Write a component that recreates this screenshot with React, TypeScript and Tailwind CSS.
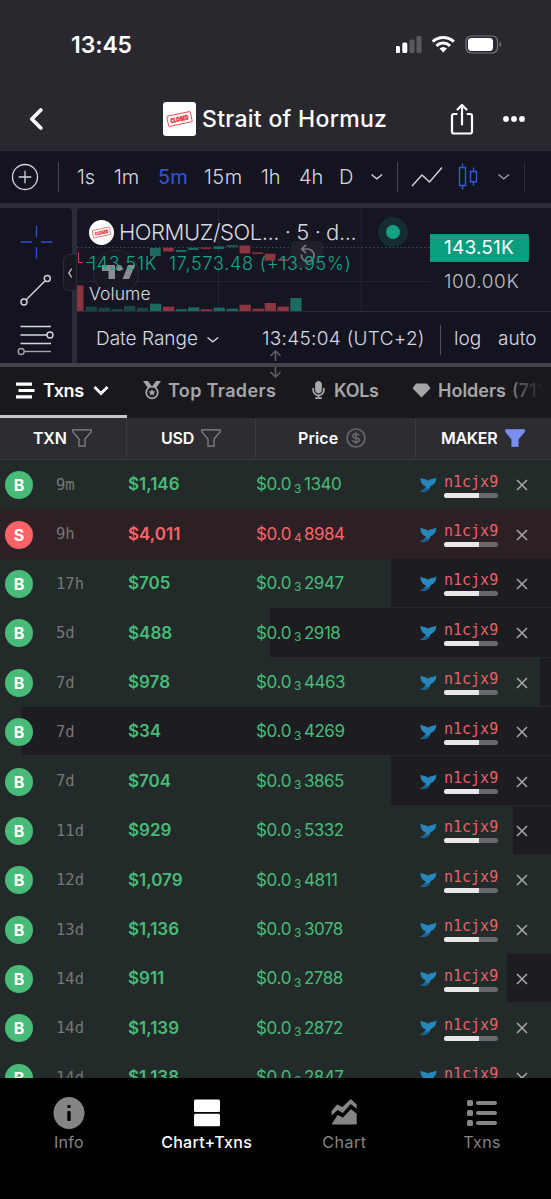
import React from 'react';
import { FaMicrophone } from 'react-icons/fa';

interface Txn {
  type: 'B' | 'S';
  age: string;
  usd: string;
  zeros: number;
  price: string;
  bar: number;
}

const TXNS: Txn[] = [
  { type: 'B', age: '9m', usd: '$1,146', zeros: 3, price: '1340', bar: 551 },
  { type: 'S', age: '9h', usd: '$4,011', zeros: 4, price: '8984', bar: 551 },
  { type: 'B', age: '17h', usd: '$705', zeros: 3, price: '2947', bar: 391 },
  { type: 'B', age: '5d', usd: '$488', zeros: 3, price: '2918', bar: 270 },
  { type: 'B', age: '7d', usd: '$978', zeros: 3, price: '4463', bar: 540 },
  { type: 'B', age: '7d', usd: '$34', zeros: 3, price: '4269', bar: 21 },
  { type: 'B', age: '7d', usd: '$704', zeros: 3, price: '3865', bar: 391 },
  { type: 'B', age: '11d', usd: '$929', zeros: 3, price: '5332', bar: 513 },
  { type: 'B', age: '12d', usd: '$1,079', zeros: 3, price: '4811', bar: 551 },
  { type: 'B', age: '13d', usd: '$1,136', zeros: 3, price: '3078', bar: 551 },
  { type: 'B', age: '14d', usd: '$911', zeros: 3, price: '2788', bar: 507 },
  { type: 'B', age: '14d', usd: '$1,139', zeros: 3, price: '2872', bar: 551 },
  { type: 'B', age: '14d', usd: '$1,138', zeros: 3, price: '2847', bar: 551 },
];

const GREEN = '#1c6b60';
const RED = '#8c3440';

// [x, y, height, color], relative to the chart pane
const CANDLES: [number, number, number, string][] = [
  [73, 40, 8, GREEN],
  [86, 39.7, 3.8, RED],
  [98.7, 42, 2, GREEN],
  [111, 39.7, 2.3, GREEN],
  [123.7, 39.5, 1.4, RED],
  [136.5, 38.3, 2.7, GREEN],
  [149.7, 37.3, 1.5, GREEN],
  [162.5, 37.6, 7.8, RED],
  [175.5, 44.4, 1.6, RED],
  [187.7, 45.7, 7, RED],
  [201, 51, 2, RED],
];

const VOLUME: [number, number, string][] = [
  [8.7, 4.3, '#164844'],
  [21.7, 3.3, '#164844'],
  [34.5, 2, '#164844'],
  [47, 5, '#164844'],
  [60, 3.3, '#164844'],
  [73, 7.3, GREEN],
  [86, 4.3, RED],
  [98.7, 1.7, GREEN],
  [111, 3.6, GREEN],
  [123.7, 1.7, RED],
  [136.5, 3.3, GREEN],
  [149.7, 2.3, GREEN],
  [162.5, 6.3, RED],
  [175.5, 2.3, RED],
  [187.7, 8, RED],
  [200.5, 4.4, RED],
  [213.3, 13, GREEN],
];

const ClosedStamp: React.FC<{ className: string }> = ({ className }) => (
  <svg viewBox="0 0 32 34" className={className}>
    <g transform="rotate(-12 16 17)" stroke="#e5484f" fill="none">
      <rect x="4" y="11.8" width="24" height="10.4" rx="0.6" strokeWidth="0.9" />
      <text
        x="16"
        y="19.4"
        textAnchor="middle"
        textLength="18.5"
        lengthAdjust="spacingAndGlyphs"
        fontSize="6.6"
        fontWeight="900"
        fontFamily="Inter, sans-serif"
        fill="#e11d2b"
        strokeWidth="0.3"
      >
        CLOSED
      </text>
    </g>
  </svg>
);

const StatusBar = () => (
  <div className="flex h-[88px] items-center pl-[71px] pr-[47px] pt-[2px] text-white">
    <span className="text-[23px] font-semibold tracking-[-0.1px]">13:45</span>
    <svg width="108" height="20" viewBox="0 0 108 20" className="ml-auto">
      <rect x="-1" y="11" width="5" height="7" rx="1.5" fill="#fff" />
      <rect x="6.300" y="7.500" width="5" height="10.500" rx="1.500" fill="#fff" />
      <rect x="13.500" y="4.500" width="5" height="13.500" rx="1.500" fill="#59585d" />
      <rect x="20.500" y="1" width="5" height="17" rx="1.500" fill="#59585d" />
      <g fill="none" stroke="#fff" strokeWidth="3">
        <path d="M36.700 6.600a15.500 15.500 0 0 1 21.100 0" />
        <path d="M40.500 10.800a9.800 9.800 0 0 1 13.500 0" />
      </g>
      <path d="M43.500 13.600a5.600 5.600 0 0 1 7.500 0l-3.750 4z" fill="#fff" />
      <rect x="70" y="1" width="31.500" height="17" rx="5.200" fill="none" stroke="#77767b" strokeWidth="1.200" />
      <rect x="72" y="3" width="25" height="13" rx="3.400" fill="#fff" />
      <path d="M103.500 7v5c2.300-.8 2.300-4.200 0-5z" fill="#77767b" />
    </svg>
  </div>
);

const TitleBar = () => (
  <div className="flex h-[62px] items-center text-white">
    <svg width="16" height="26" viewBox="0 0 16 26" fill="none" className="ml-[28px]">
      <path d="m12.800 4-9 9 9 9" stroke="#fff" strokeWidth="3.800" strokeLinecap="round" strokeLinejoin="round" />
    </svg>
    <ClosedStamp className="ml-[119px] h-[34px] w-[33px] rounded-[3px] bg-white" />
    <span className="ml-[6px] w-[190px] whitespace-nowrap text-[23px] font-medium tracking-[0.300px]">
      Strait of Hormuz
    </span>
    <svg width="26" height="34" viewBox="0 0 26 34" fill="none" stroke="#fff" strokeWidth="2.200" strokeLinejoin="round" className="ml-[57px] shrink-0">
      <path d="M8.300 12H5a2 2 0 0 0-2 2v15.500a2 2 0 0 0 2 2h16a2 2 0 0 0 2-2V14a2 2 0 0 0-2-2h-3.300" />
      <path d="M13 22.500V3.500M8.500 7.500 13 3l4.500 4.500" strokeLinecap="round" />
    </svg>
    <svg width="24" height="8" viewBox="0 0 24 8" fill="#fff" className="ml-[27px] shrink-0">
      <circle cx="4" cy="4" r="2.900" />
      <circle cx="12" cy="4" r="2.900" />
      <circle cx="20" cy="4" r="2.900" />
    </svg>
  </div>
);

const Chevron: React.FC<{ className: string }> = ({ className }) => (
  <svg width="14" height="8" viewBox="0 0 14 8" fill="none" className={className}>
    <path d="m1.5 1.5 5.3 4.3 5.3-4.3" stroke="currentColor" strokeWidth="1.3" />
  </svg>
);

const IntervalBar = () => (
  <div className="flex h-[53px] items-center border-t border-[#303039] bg-[#131420] text-[20px] font-light text-[#d8d9e0]">
    <svg width="28" height="28" viewBox="0 0 28 28" fill="none" stroke="#d6d7de" strokeWidth="1.3" className="ml-[11px]">
      <circle cx="14" cy="14" r="12.5" />
      <path d="M14 7.7v12.6M7.7 14h12.6" />
    </svg>
    <div className="ml-[19px] h-[30px] w-px bg-[#45464f]" />
    <span className="ml-[18px] w-[37px]">1s</span>
    <span className="w-[44px]">1m</span>
    <span className="w-[46px] font-normal text-[#3556dc]">5m</span>
    <span className="w-[57px] tracking-[0.5px]">15m</span>
    <span className="w-[38px]">1h</span>
    <span className="w-[40px]">4h</span>
    <span className="w-[31px]">D</span>
    <Chevron className="shrink-0" />
    <div className="ml-[13px] h-[30px] w-px bg-[#45464f]" />
    <svg width="32" height="22" viewBox="0 0 32 22" fill="none" className="ml-[13px] shrink-0">
      <path d="m1 20 10-11 7.5 7L31 1.5" stroke="#d6d7de" strokeWidth="1.4" />
    </svg>
    <svg width="20" height="30" viewBox="0 0 20 30" fill="none" stroke="#3158df" strokeWidth="1.4" className="ml-[15px] shrink-0">
      <path d="M1.5 5.5h6v18h-6zM4.5 1.5v4M4.5 23.5v4M12.5 9.5h6v10.2h-6zM15.5 5.5v4M15.5 19.7v4" />
    </svg>
    <Chevron className="ml-[19px] shrink-0 text-[#9899a1]" />
    <div className="ml-[13px] h-[30px] w-px bg-[#2c2d37]" />
  </div>
);

const DrawingTools = () => (
  <div className="h-full w-[72px] rounded-tr-[4px] bg-[#131420]">
    <svg width="72" height="155" viewBox="0 0 72 155" fill="none" stroke="#d6d7de" strokeWidth="1.4">
      <path d="M36.5 18v11.5M36.5 39v11.5M20.5 34H32M41 34h11.5" stroke="#2e50c8" />
      <path d="M26.200 91.800 45.200 72.700" />
      <circle cx="24" cy="94" r="3" />
      <circle cx="47.300" cy="70.500" r="3" />
      <path d="M20.500 118.500h30.500M20.500 127H47M20.500 135.500h30.500" />
      <circle cx="50" cy="127" r="3" />
      <g stroke="#a2a3aa">
        <path d="M24.500 143.500H51" />
        <circle cx="21.200" cy="143.500" r="3" />
      </g>
    </svg>
  </div>
);

const ChartPane = () => (
  <div className="relative h-[104px] border-b border-[#2a2b35] text-[#d8d9e0]">
    <svg width="474" height="103" viewBox="0 0 474 103" className="absolute left-0 top-0">
      <path d="M141.500 0v103M284 0v103M0 73.500h353" stroke="#242530" fill="none" />
      <path d="M0 39.500h353" stroke="#1d675d" strokeDasharray="1.300 2.600" fill="none" />
      <circle cx="39" cy="65" r="22.500" fill="#181923" stroke="#2b2c35" />
      <path d="M25 57h13v14h-6.500v-8H25zM45.500 71l5.700-14H58l-5.800 14z" fill="#8b8b91" />
      <circle cx="42.200" cy="60" r="3" fill="#8b8b91" />
      <rect x="214" y="33" width="32" height="27" rx="4" fill="#20212b" />
      {CANDLES.map(([x, y, h, color]) => (
        <rect key={x} x={x} y={y} width="10.700" height={h} fill={color} />
      ))}
      <rect x="0" y="77.500" width="6.500" height="25.500" fill={RED} />
      {VOLUME.map(([x, h, color]) => (
        <rect key={x} x={x} y={103 - h} width="11.300" height={h} fill={color} />
      ))}
      <path d="M1.500 44v11M1.500 54.500H6" stroke="#d93c4d" fill="none" />
      <path d="M9 54.500h7" stroke="#18967f" fill="none" />
      <path d="M224.500 46.500a6.300 6.300 0 1 0 6-5.500h-5M229 36.800l-4.300 4.200 4.300 4.200" stroke="#77777d" strokeWidth="1.700" fill="none" />
    </svg>
    <div className="relative flex h-[48px] items-center pl-[12px] font-light">
      <ClosedStamp className="size-[25px] shrink-0 rounded-full bg-white" />
      <span className="ml-[5px] w-[241px] whitespace-nowrap text-[22px] tracking-[-0.450px]">
        HORMUZ/SOL... · 5 · d...
      </span>
      <div className="ml-[18px] flex size-[30px] items-center justify-center rounded-full bg-[#152d31]">
        <div className="size-[14px] rounded-full bg-[#13a083]" />
      </div>
    </div>
    <div className="relative flex h-[14px] items-center whitespace-nowrap pl-[12px] text-[18px] font-light text-[#18a58a]">
      <span className="w-[80px] tracking-[0.700px]">143.51K</span>
      <span className="tracking-[0.750px]">17,573.48 (+13.95%)</span>
    </div>
    <div className="relative pl-[12px] pt-[11px] text-[17.500px] font-light tracking-[0.100px]">Volume</div>
    <div className="absolute left-[353px] top-[26px] flex h-[28px] w-[99px] items-center rounded-r-[2px] bg-[#0b9d80] pl-[14px] text-[19px] tracking-[0.200px] text-white">
      143.51K
    </div>
    <div className="absolute left-[367px] top-[60px] text-[19px] font-light tracking-[0.600px] text-[#bdbec7]">100.00K</div>
    <div className="absolute left-[-14px] top-[46px] flex h-[37px] w-[13px] items-center justify-center rounded-l-[6px] border border-r-0 border-[#2a2b36] bg-[#171822]">
      <svg width="6" height="12" viewBox="0 0 6 12" fill="none">
        <path d="M4.700 1.500 1.900 6l2.800 4.500" stroke="#c7c8d0" strokeWidth="1.300" />
      </svg>
    </div>
  </div>
);

const Chart = () => (
  <div className="relative flex h-[160px] border-b-[4px] border-[#424248] bg-[#2b2c37] pt-px">
    <DrawingTools />
    <div className="ml-[5px] h-full flex-1 rounded-tl-[4px] bg-[#151621]">
      <ChartPane />
      <div className="flex h-[51px] items-center whitespace-nowrap bg-[#131420] pl-[19px] pt-[4px] text-[19px] font-light text-[#d8d9e0]">
        <span className="w-[110px]">Date Range</span>
        <Chevron className="shrink-0" />
        <span className="ml-[42px] w-[178px] tracking-[0.300px]">13:45:04 (UTC+2)</span>
        <div className="h-[30px] w-px bg-[#50515a]" />
        <span className="ml-[13px] w-[44px]">log</span>
        <span>auto</span>
      </div>
    </div>
    <svg width="14" height="30" viewBox="0 0 14 30" fill="none" className="absolute left-[269px] top-[142px]">
      <path d="M6.500 2v10M1.500 7l5-5 5 5M6.500 18v10M1.500 23l5 5 5-5" stroke="#616169" strokeWidth="1.500" />
    </svg>
  </div>
);

const Tabs = () => (
  <div className="flex h-[51px] items-stretch whitespace-nowrap bg-[#19181d] text-[18px] font-semibold text-[#a6a6a9]">
    <div className="flex w-[127px] items-center border-b-[3px] border-[#c7c7c9] pl-[16px] pb-[2px] text-white">
      <svg width="19" height="17" viewBox="0 0 19 17" fill="#fff" className="mr-[8px]">
        <path d="M0 .5h16v3.200H0zM2.500 6.900h16v3.200h-16zM0 13.300h16v3.200H0z" />
      </svg>
      <span className="w-[50px] tracking-[-0.400px]">Txns</span>
      <svg width="16" height="11" viewBox="0 0 16 11" fill="none">
        <path d="m1.500 2 6.500 6.500L14.500 2" stroke="#fff" strokeWidth="2.800" />
      </svg>
    </div>
    <div className="flex items-center pb-[5px]">
      <svg width="18" height="20" viewBox="0 0 18 20" className="ml-[16px] mr-[7px]">
        <path d="M0 1h5l3.500 5L5 8zM18 1h-5L9.500 6 13 8z" fill="#a6a6a9" />
        <circle cx="9" cy="12.500" r="5.800" fill="none" stroke="#a6a6a9" strokeWidth="1.800" />
        <path d="m9 9 1.100 2.200 2.400.3-1.800 1.700.5 2.400L9 14.400l-2.200 1.200.5-2.400-1.800-1.700 2.400-.3z" fill="#a6a6a9" />
      </svg>
      <span className="w-[144px] tracking-[0.350px]">Top Traders</span>
      <FaMicrophone className="mr-[9px] h-[18px] w-[13px] text-[#aaa9ad]" />
      <span className="w-[78px] tracking-[-0.300px]">KOLs</span>
      <svg width="19" height="15" viewBox="0 0 19 15" fill="#a6a6a9" className="mr-[7px]">
        <path d="M4 .5h11L18.500 5.300 9.500 14.500.5 5.300z" />
      </svg>
      <span className="w-[74px]">Holders</span>
      <span className="bg-gradient-to-r from-[#77767b] to-[#19181d] bg-clip-text text-transparent">(711</span>
    </div>
  </div>
);

const Funnel: React.FC<{ className: string; active?: boolean }> = ({ className, active }) => (
  <svg width="20" height="18" viewBox="0 0 20 18" className={className}>
    <path
      d="M.8.8h18.400v2L13 10v7.200H7V10L.8 2.800z"
      fill={active ? '#7b8ff2' : 'none'}
      stroke={active ? '#7b8ff2' : '#86868b'}
      strokeWidth="1.200"
    />
  </svg>
);

const TableHead = () => (
  <div className="flex h-[42px] items-stretch border-b border-[#3b3639] bg-[#2d2c31] pb-px text-[16px] font-semibold text-white">
    <div className="flex w-[127px] items-center border-r border-[#3b3a40] pl-[33px]">
      <span className="w-[39px] tracking-[-0.200px]">TXN</span>
      <Funnel className="shrink-0" />
    </div>
    <div className="flex w-[129px] items-center border-r border-[#3b3a40] pl-[34px]">
      <span className="w-[40px] tracking-[-0.200px]">USD</span>
      <Funnel className="shrink-0" />
    </div>
    <div className="flex w-[160px] items-center border-r border-[#3b3a40] pl-[42px]">
      <span className="w-[48px] tracking-[0.100px]">Price</span>
      <svg width="20" height="20" viewBox="0 0 20 20" fill="none" stroke="#69696d" strokeWidth="1.600">
        <circle cx="10" cy="10" r="9" />
        <path d="M13.300 7.500C12.800 6.500 11.600 6 10 6 8 6 6.800 6.800 6.800 8c0 1.400 1.500 1.800 3.200 2s3.400.6 3.400 2.100c0 1.200-1.300 2-3.400 2-1.700 0-3-.6-3.500-1.700M10 4.300V16" />
      </svg>
    </div>
    <div className="flex items-center pl-[25px]">
      <span className="w-[64px] tracking-[-0.300px]">MAKER</span>
      <Funnel active className="shrink-0" />
    </div>
  </div>
);

const WhaleTail = () => (
  <svg width="18" height="18" viewBox="0 0 18 18" className="shrink-0">
    <path d="M1.500 1.800C3.500 3 7 2.700 9.300 4.800c2-2 5.400-1.500 8-3.200.1 4-1.600 6.600-4.500 7.800-1.300.6-1.600 1.400-2 2.700-.9 3-4 4.300-9.800 3.900 2.500-1.200 5.200-3.200 6-5.400C3.500 9.400 1.500 6.500 1.500 1.800z" fill="#2787bd" />
    <path d="M5.400 12.300c1.900.4 3.600.2 5.300-.3-1.100 3-4 4.300-9.700 4 2-.9 3.500-2.200 4.400-3.700z" fill="#1b618d" />
  </svg>
);

const TxnRow: React.FC<{ txn: Txn }> = ({ txn }) => {
  const isBuy = txn.type === 'B';
  return (
    <div className="relative h-[49.400px] shrink-0 border-b border-[#27262b] bg-[#1d1c21]">
      <div
        className={`absolute left-0 top-0 h-[49.400px] ${isBuy ? 'bg-[#222b29]' : 'bg-[#2c2025]'}`}
        style={{ width: txn.bar }}
      />
      <div className={`relative flex h-full items-center pt-[2px] ${isBuy ? 'text-[#48bb78]' : 'text-[#fb6467]'}`}>
        <div className="w-[56px] pl-[5px]">
          <div
            className={`flex size-[28px] items-center justify-center rounded-full text-[16px] font-bold text-white ${
              isBuy ? 'bg-[#48bb78]' : 'bg-[#fb6467]'
            }`}
          >
            {txn.type}
          </div>
        </div>
        <span className="w-[72px] pt-px font-['DejaVu_Sans_Mono',monospace] text-[15.500px] text-[#757779]">{txn.age}</span>
        <span className="w-[128px] text-[17px] font-semibold">{txn.usd}</span>
        <span className="flex w-[163px] items-center text-[17px] tracking-[-0.500px]">
          <span className="w-[38px] tracking-[-0.300px]">$0.0</span>
          <span className="w-[10px] pt-[7px] text-[12px]">{txn.zeros}</span>
          {txn.price}
        </span>
        <WhaleTail />
        <div className="ml-[7px] w-[54px] pt-px">
          <div className="h-[19px] font-['DejaVu_Sans_Mono',monospace] text-[15px] leading-[17px] text-[#e86168]">n1cjx9</div>
          <div className="flex h-[5px] overflow-hidden rounded-full bg-[#68696c]">
            <div className="w-[35px] bg-[#e8e8e8]" />
          </div>
        </div>
        <svg width="12" height="12" viewBox="0 0 12 12" className="ml-[18px]">
          <path d="m1 1 10 10M11 1 1 11" stroke="#a9abac" strokeWidth="1.500" />
        </svg>
      </div>
    </div>
  );
};

const BottomNav = () => (
  <nav className="grid h-[121px] grid-cols-4 bg-black text-[16px] text-[#858585]">
    <div className="flex flex-col items-center pt-[18px]">
      <svg width="32" height="34" viewBox="0 0 32 34">
        <ellipse cx="16" cy="17" rx="15.500" ry="16" fill="#858585" />
        <rect x="14.300" y="9" width="3.400" height="3" rx="1.200" fill="#000" />
        <rect x="14.300" y="15" width="3.400" height="10" rx="1" fill="#000" />
      </svg>
      <span className="tracking-[0.300px]">Info</span>
    </div>
    <div className="flex flex-col items-center pt-[18px] text-white">
      <svg width="32" height="34" viewBox="0 0 32 34" fill="#fff">
        <rect x="3" y="3.500" width="26" height="12.500" rx="1.500" />
        <rect x="3" y="17.800" width="26" height="12.500" rx="1.500" />
      </svg>
      <span className="font-medium tracking-[0.250px]">Chart+Txns</span>
    </div>
    <div className="flex flex-col items-center pt-[18px]">
      <svg width="32" height="34" viewBox="0 0 32 34" fill="#858585">
        <path d="m3.500 15 5.500-6.500 5.500 2.500L22.700 3l6 5.500v4.300l-6-4.800-8 9-5-3L3.500 19.500z" />
        <path d="m3.500 28.500 6-9.500 5.500 2.500L23 13l5.700 4.800v10.700z" />
      </svg>
      <span className="tracking-[0.500px]">Chart</span>
    </div>
    <div className="flex flex-col items-center pt-[18px]">
      <svg width="32" height="34" viewBox="0 0 32 34" fill="#858585">
        <rect x="1" y="4" width="6" height="6" rx="1.500" />
        <rect x="10" y="5" width="21" height="4" rx="2" />
        <rect x="1" y="14" width="6" height="6" rx="1.500" />
        <rect x="10" y="15" width="21" height="4" rx="2" />
        <rect x="1" y="24" width="6" height="6" rx="1.500" />
        <rect x="10" y="25" width="21" height="4" rx="2" />
      </svg>
      <span className="tracking-[0.400px]">Txns</span>
    </div>
  </nav>
);

const App = () => {
  return (
    <div className="flex h-[1199px] w-[551px] flex-col overflow-hidden bg-[#29282e] font-['Inter',sans-serif]">
      <StatusBar />
      <TitleBar />
      <IntervalBar />
      <div className="h-[4px] bg-[#2b2c37]" />
      <Chart />
      <Tabs />
      <TableHead />
      <div className="flex min-h-0 flex-1 flex-col overflow-hidden">
        {TXNS.map((txn, i) => (
          <TxnRow key={i} txn={txn} />
        ))}
      </div>
      <BottomNav />
    </div>
  );
};

export default App;
